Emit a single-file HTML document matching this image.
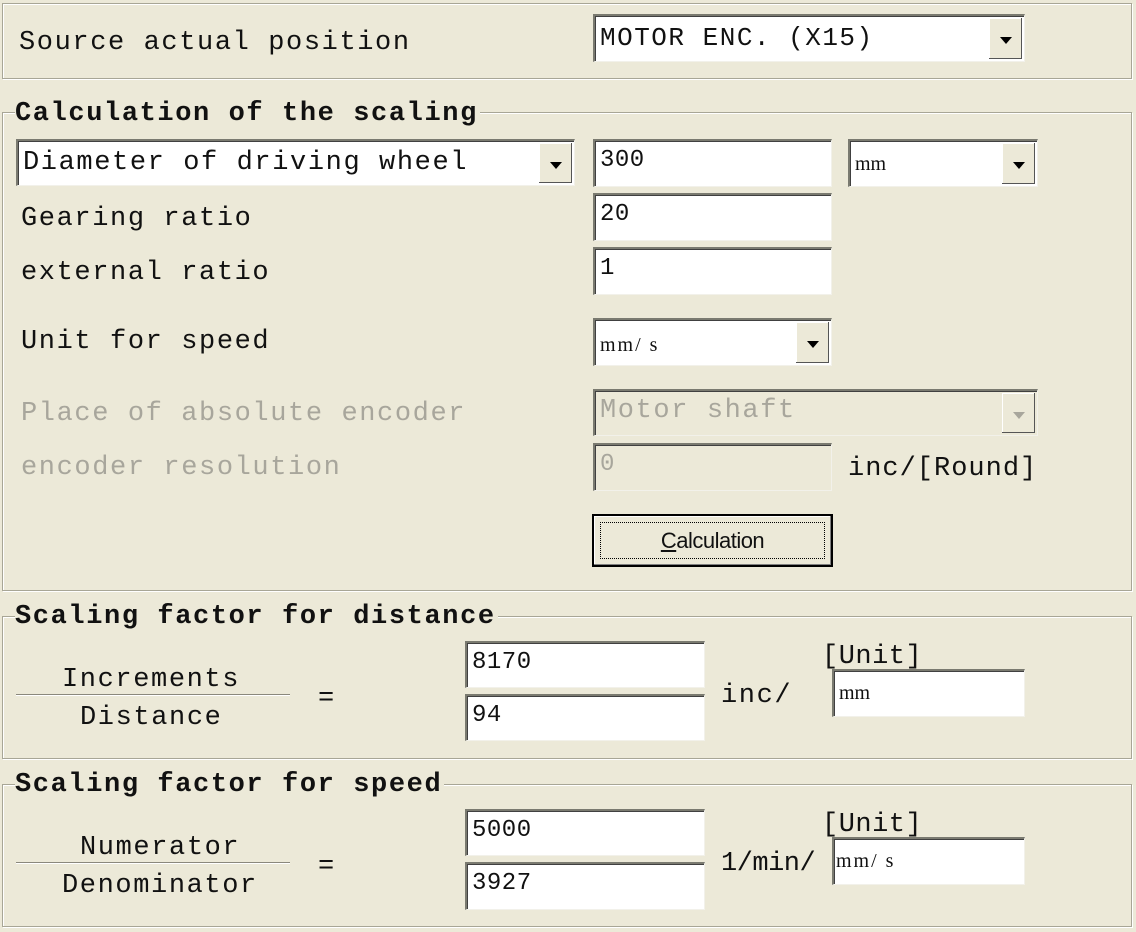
<!DOCTYPE html>
<html><head><style>
body{margin:0;width:1136px;height:932px;background:#ECE9D8;position:relative;overflow:hidden;font-family:"Liberation Mono","Courier New",monospace;color:#111;}
.a{position:absolute;}
.t{position:absolute;font-size:27px;letter-spacing:1.6px;white-space:nowrap;line-height:30px;}
.b{font-weight:bold;background:#ECE9D8;padding-right:2px;}
.g{position:absolute;border:1px solid #a8a696;box-shadow:inset 1px 1px 0 #fff,1px 1px 0 #fff;}
.e{position:absolute;background:#fff;border-top:2px solid #7a7a70;border-left:2px solid #7a7a70;border-right:1px solid #f2f1ea;border-bottom:1px solid #f2f1ea;box-shadow:inset 1px 1px 0 #404040;box-sizing:border-box;font-size:24px;line-height:40px;padding-left:5px;letter-spacing:0.5px;}
.dis{background:#ECE9D8;color:#a8a69c;}
.arr{position:absolute;right:2px;top:2px;bottom:2px;width:32px;background:#ECE9D8;border-right:1px solid #555;border-bottom:1px solid #555;box-shadow:inset 1px 1px 0 #fff;}
.arr:after{content:"";position:absolute;left:11px;top:19px;border-left:6px solid transparent;border-right:6px solid transparent;border-top:7px solid #000;}
.dis .arr:after{border-top-color:#a8a69c;}
.sm{font-family:"Liberation Serif",serif;font-size:20px;letter-spacing:0;}
.gr{color:#a8a69c;}
</style></head><body>
<div class="g" style="left:2px;top:3px;width:1128px;height:74px"></div>
<div class="t" style="left:19px;top:28px">Source actual position</div>
<div class="e" style="left:593px;top:14px;width:432px;height:48px;line-height:44px;font-size:26px;letter-spacing:1.5px">MOTOR ENC. (X15)<div class="arr"></div></div>

<div class="g" style="left:2px;top:112px;width:1128px;height:477px"></div>
<div class="t b" style="left:15px;top:99px">Calculation of the scaling</div>
<div class="e" style="left:16px;top:139px;width:559px;height:47px;letter-spacing:1.6px;font-size:27px;line-height:44px">Diameter of driving wheel<div class="arr"></div></div>
<div class="e" style="left:593px;top:139px;width:239px;height:48px;line-height:40px">300</div>
<div class="e sm" style="left:848px;top:139px;width:190px;height:48px;line-height:46px">mm<div class="arr"></div></div>
<div class="t" style="left:21px;top:204px">Gearing ratio</div>
<div class="e" style="left:593px;top:193px;width:239px;height:48px">20</div>
<div class="t" style="left:21px;top:258px">external ratio</div>
<div class="e" style="left:593px;top:247px;width:239px;height:48px">1</div>
<div class="t" style="left:21px;top:327px">Unit for speed</div>
<div class="e sm" style="left:593px;top:318px;width:239px;height:48px;line-height:50px;letter-spacing:2px">mm/ s<div class="arr"></div></div>
<div class="t gr" style="left:21px;top:399px">Place of absolute encoder</div>
<div class="e dis" style="left:593px;top:389px;width:445px;height:47px;letter-spacing:1.6px;font-size:27px">Motor shaft<div class="arr"></div></div>
<div class="t gr" style="left:21px;top:453px">encoder resolution</div>
<div class="e dis" style="left:593px;top:443px;width:239px;height:48px">0</div>
<div class="t" style="left:848px;top:454px;letter-spacing:1px">inc/[Round]</div>
<div class="a" style="left:592px;top:514px;width:237px;height:49px;border:2px solid #000;background:#ECE9D8;box-shadow:inset -1px -1px 0 #808080, inset 1px 1px 0 #fff"><div class="a" style="left:6px;top:6px;right:6px;bottom:6px;border:1px dotted #000;font-family:'Liberation Sans',sans-serif;font-size:22px;text-align:center;line-height:36px;letter-spacing:-0.5px"><u>C</u>alculation</div></div>

<div class="g" style="left:2px;top:616px;width:1128px;height:141px"></div>
<div class="t b" style="left:15px;top:602px">Scaling factor for distance</div>
<div class="t" style="left:62px;top:665px">Increments</div>
<div class="a" style="left:16px;top:694px;width:274px;height:1px;background:#8a887c;box-shadow:0 1px 0 #fff"></div>
<div class="t" style="left:80px;top:703px">Distance</div>
<div class="t" style="left:318px;top:684px">=</div>
<div class="e" style="left:465px;top:641px;width:240px;height:47px">8170</div>
<div class="e" style="left:465px;top:694px;width:240px;height:47px">94</div>
<div class="t" style="left:721px;top:681px">inc/</div>
<div class="t" style="left:822px;top:642px;letter-spacing:0.5px">[Unit]</div>
<div class="e sm" style="left:832px;top:669px;width:193px;height:48px;line-height:44px">mm</div>

<div class="g" style="left:2px;top:784px;width:1128px;height:141px"></div>
<div class="t b" style="left:15px;top:770px">Scaling factor for speed</div>
<div class="t" style="left:80px;top:833px">Numerator</div>
<div class="a" style="left:16px;top:862px;width:274px;height:1px;background:#8a887c;box-shadow:0 1px 0 #fff"></div>
<div class="t" style="left:62px;top:871px">Denominator</div>
<div class="t" style="left:318px;top:852px">=</div>
<div class="e" style="left:465px;top:809px;width:240px;height:47px">5000</div>
<div class="e" style="left:465px;top:862px;width:240px;height:48px">3927</div>
<div class="t" style="left:721px;top:849px;letter-spacing:-0.5px">1/min/</div>
<div class="t" style="left:822px;top:810px;letter-spacing:0.5px">[Unit]</div>
<div class="e sm" style="left:832px;top:837px;width:193px;height:48px;line-height:44px;padding-left:2px;letter-spacing:2px">mm/ s</div>
</body></html>
